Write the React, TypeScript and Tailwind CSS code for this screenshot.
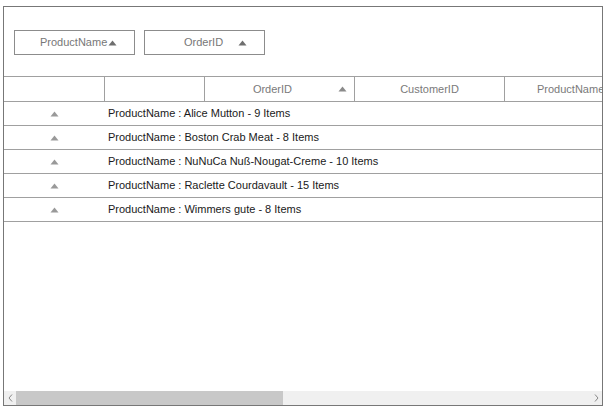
const ROWS = [
  "Alice Mutton - 9 Items",
  "Boston Crab Meat - 8 Items",
  "NuNuCa Nuß-Nougat-Creme - 10 Items",
  "Raclette Courdavault - 15 Items",
  "Wimmers gute - 8 Items",
];

function Up({ className }: { className: string }) {
  return (
    <svg width="9" height="6" viewBox="0 0 9 6" className={className}>
      <path d="M4.5 0.5 L8.5 5.5 L0.5 5.5 Z" fill="currentColor" />
    </svg>
  );
}

export default function App() {
  return (
    <div
      className="w-[607px] h-[413px] bg-white pt-[6px] pl-[3px] text-[11px]"
      style={{ fontFamily: '"Liberation Sans", Arial, sans-serif' }}
    >
      <div className="w-[600px] h-[400px] border border-[#777] flex flex-col overflow-hidden">
        {/* Group drop area */}
        <div className="h-[70px] shrink-0 border-b border-[#a0a0a0] pl-[10px] pt-[23px] flex gap-[9px]">
          <div className="w-[121px] h-[25px] border border-[#8c8c8c] flex items-center pl-[25px] text-[#777]">
            <span>ProductName</span>
            <Up className="text-[#6e6e6e] ml-[1px]" />
          </div>
          <div className="w-[121px] h-[25px] border border-[#8c8c8c] flex items-center pl-[39px] text-[#777]">
            <span>OrderID</span>
            <Up className="text-[#6e6e6e] ml-[15px]" />
          </div>
        </div>

        {/* Header */}
        <div className="h-[25px] shrink-0 border-b border-[#a0a0a0] flex text-[#7a7a7a] whitespace-nowrap">
          <div className="w-[101px] shrink-0 border-r border-[#a0a0a0]" />
          <div className="w-[100px] shrink-0 border-r border-[#a0a0a0]" />
          <div className="w-[150px] shrink-0 border-r border-[#a0a0a0] flex items-center justify-end pr-[7px]">
            <span>OrderID</span>
            <Up className="text-[#8a8a8a] ml-[46px]" />
          </div>
          <div className="w-[150px] shrink-0 border-r border-[#a0a0a0] flex items-center justify-center">
            CustomerID
          </div>
          <div className="w-[150px] shrink-0 flex items-center pl-[32px]">ProductName</div>
        </div>

        {/* Caption rows */}
        {ROWS.map((r) => (
          <div key={r} className="h-[24px] shrink-0 border-b border-[#a0a0a0] flex items-center whitespace-nowrap">
            <div className="w-[101px] shrink-0 flex justify-center">
              <Up className="text-[#999]" />
            </div>
            <div className="pl-[3px] text-[#1a1a1a]">ProductName : {r}</div>
          </div>
        ))}

        <div className="flex-1" />

        {/* Horizontal scrollbar */}
        <div className="h-[14px] shrink-0 bg-[#f0f0f0] flex items-center">
          <div className="w-[12px] flex justify-center text-[#888]">
            <svg width="5" height="8" viewBox="0 0 5 8">
              <path d="M4 0.5 L1 4 L4 7.5" fill="none" stroke="currentColor" strokeWidth="1" />
            </svg>
          </div>
          <div className="w-[267px] h-full bg-[#c8c8c8]" />
          <div className="flex-1" />
          <div className="w-[12px] flex justify-center text-[#888]">
            <svg width="5" height="8" viewBox="0 0 5 8">
              <path d="M1 0.5 L4 4 L1 7.5" fill="none" stroke="currentColor" strokeWidth="1" />
            </svg>
          </div>
        </div>
      </div>
    </div>
  );
}
